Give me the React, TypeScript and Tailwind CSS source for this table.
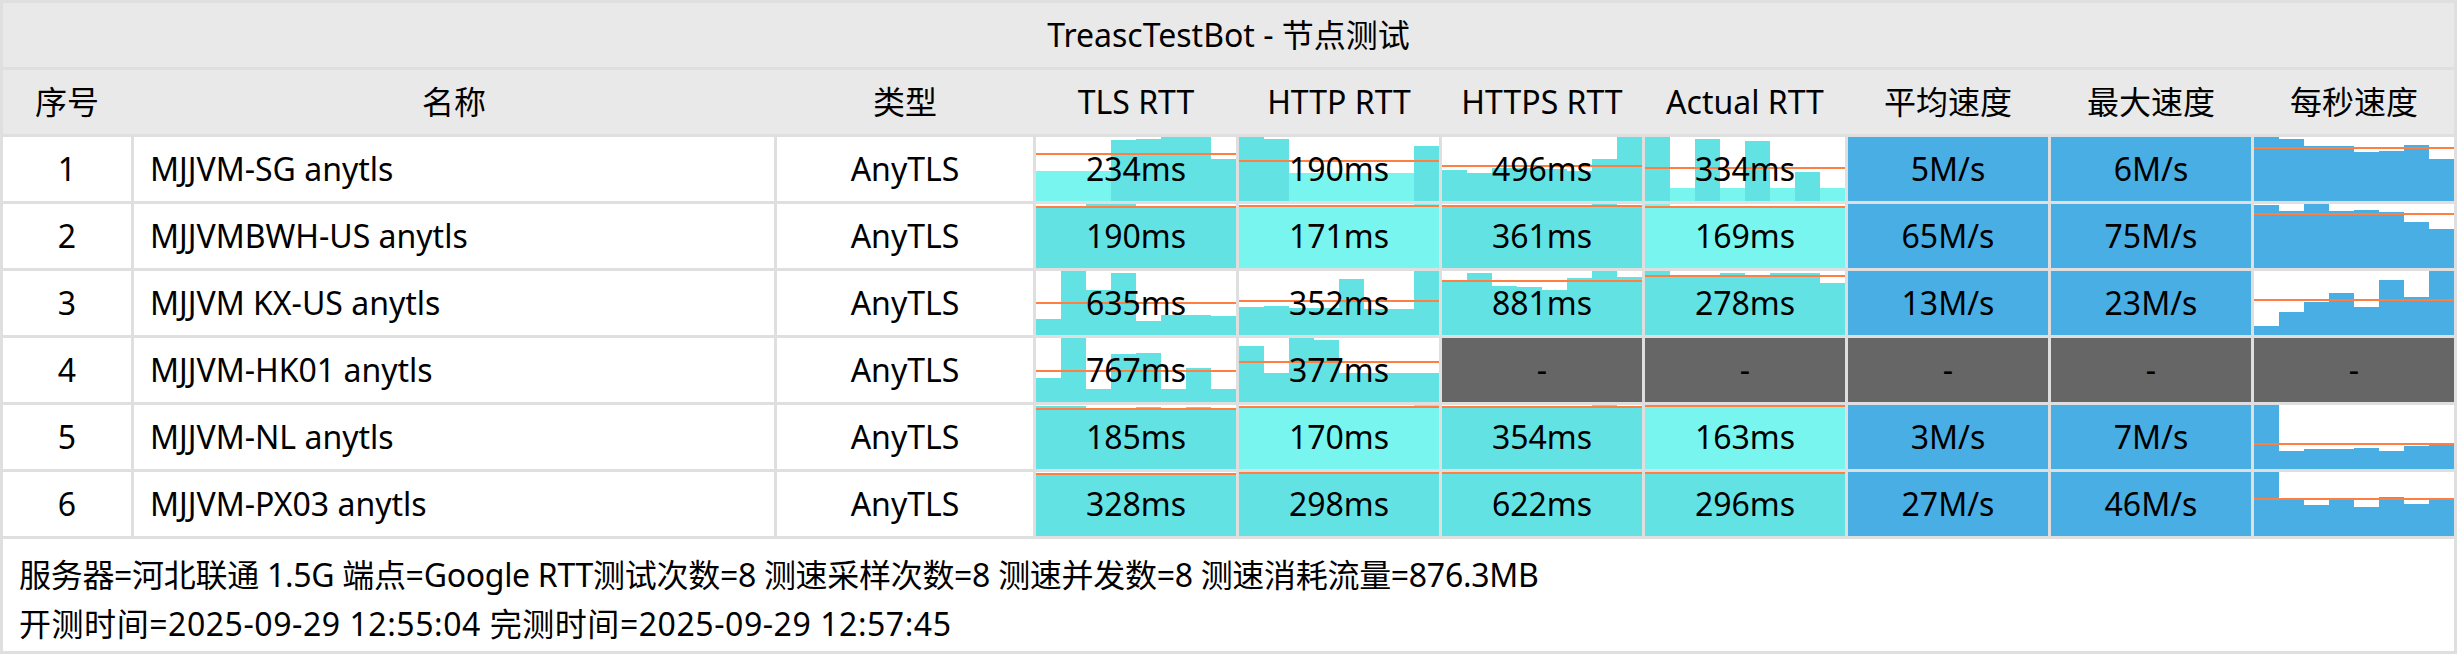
import React from "react";

type Chart = { bars: number[]; line: number; dark: string };

type Cell =
  | { kind: "rtt"; text: string; chart: Chart }
  | { kind: "speed"; text: string }
  | { kind: "series"; chart: Chart }
  | { kind: "fail" };

const L = "#78f5ef";
const D = "#63e2e4";
const B = "#48aee4";

function c(bars: number[], line: number, dark: string): Chart {
  return { bars, line, dark };
}

type Row = { id: number; name: string; cells: Cell[] };

const rows: Row[] = [
  {
    id: 1,
    name: "MJJVM-SG anytls",
    cells: [
      { kind: "rtt", text: "234ms", chart: c([30, 30, 30, 61, 62, 64, 64, 42], 47, "LLLDDDDD") },
      { kind: "rtt", text: "190ms", chart: c([64, 62, 28, 28, 28, 28, 28, 55], 40, "DDLLLLLD") },
      { kind: "rtt", text: "496ms", chart: c([31, 28, 33, 33, 32, 30, 42, 64], 35, "DDDDDDDD") },
      { kind: "rtt", text: "334ms", chart: c([64, 13, 62, 13, 60, 13, 29, 13], 33, "DLDLDLDL") },
      { kind: "speed", text: "5M/s" },
      { kind: "speed", text: "6M/s" },
      { kind: "series", chart: c([64, 62, 55, 55, 49, 50, 56, 42], 53, "BBBBBBBB") },
    ],
  },
  {
    id: 2,
    name: "MJJVMBWH-US anytls",
    cells: [
      { kind: "rtt", text: "190ms", chart: c([60, 61, 64, 64, 60, 60, 60, 60], 61, "DDDDDDDD") },
      { kind: "rtt", text: "171ms", chart: c([62, 62, 62, 62, 62, 62, 63, 64], 62, "LLLLLLLL") },
      { kind: "rtt", text: "361ms", chart: c([63, 62, 62, 62, 62, 62, 64, 62], 62, "DDDDDDDD") },
      { kind: "rtt", text: "169ms", chart: c([64, 61, 61, 61, 61, 61, 61, 60], 61, "LLLLLLLL") },
      { kind: "speed", text: "65M/s" },
      { kind: "speed", text: "75M/s" },
      { kind: "series", chart: c([63, 57, 64, 57, 58, 56, 46, 39], 54, "BBBBBBBB") },
    ],
  },
  {
    id: 3,
    name: "MJJVM KX-US anytls",
    cells: [
      { kind: "rtt", text: "635ms", chart: c([16, 64, 45, 62, 14, 20, 20, 19], 32, "DDDDDDDD") },
      { kind: "rtt", text: "352ms", chart: c([28, 29, 27, 27, 56, 26, 26, 64], 34, "DDDDDDDD") },
      { kind: "rtt", text: "881ms", chart: c([55, 62, 49, 48, 45, 57, 64, 58], 54, "DDDDDDDD") },
      { kind: "rtt", text: "278ms", chart: c([64, 58, 58, 62, 58, 62, 62, 52], 59, "DDDDDDDD") },
      { kind: "speed", text: "13M/s" },
      { kind: "speed", text: "23M/s" },
      { kind: "series", chart: c([9, 23, 33, 42, 28, 55, 38, 64], 35, "BBBBBBBB") },
    ],
  },
  {
    id: 4,
    name: "MJJVM-HK01 anytls",
    cells: [
      { kind: "rtt", text: "767ms", chart: c([24, 64, 13, 48, 49, 13, 34, 13], 31, "DDDDDDDD") },
      { kind: "rtt", text: "377ms", chart: c([56, 29, 64, 62, 29, 29, 29, 29], 40, "DDDDDDDD") },
      { kind: "fail" },
      { kind: "fail" },
      { kind: "fail" },
      { kind: "fail" },
      { kind: "fail" },
    ],
  },
  {
    id: 5,
    name: "MJJVM-NL anytls",
    cells: [
      { kind: "rtt", text: "185ms", chart: c([63, 63, 61, 61, 62, 61, 62, 61], 60, "DDDDDDDD") },
      { kind: "rtt", text: "170ms", chart: c([62, 62, 63, 63, 62, 62, 63, 64], 62, "LLLLLLLL") },
      { kind: "rtt", text: "354ms", chart: c([62, 62, 63, 62, 62, 63, 64, 62], 62, "DDDDDDDD") },
      { kind: "rtt", text: "163ms", chart: c([63, 63, 63, 63, 63, 64, 63, 63], 63, "LLLLLLLL") },
      { kind: "speed", text: "3M/s" },
      { kind: "speed", text: "7M/s" },
      { kind: "series", chart: c([64, 18, 20, 20, 21, 18, 23, 24], 25, "BBBBBBBB") },
    ],
  },
  {
    id: 6,
    name: "MJJVM-PX03 anytls",
    cells: [
      { kind: "rtt", text: "328ms", chart: c([62, 62, 63, 62, 62, 63, 62, 62], 62, "DDDDDDDD") },
      { kind: "rtt", text: "298ms", chart: c([63, 63, 63, 63, 63, 63, 63, 64], 63, "DDDDDDDD") },
      { kind: "rtt", text: "622ms", chart: c([63, 63, 63, 64, 63, 64, 63, 63], 63, "DDDDDDDD") },
      { kind: "rtt", text: "296ms", chart: c([63, 63, 63, 63, 63, 63, 63, 63], 63, "DDDDDDDD") },
      { kind: "speed", text: "27M/s" },
      { kind: "speed", text: "46M/s" },
      { kind: "series", chart: c([64, 37, 31, 37, 29, 39, 32, 37], 37, "BBBBBBBB") },
    ],
  },
];

const colorOf = (ch: string) => (ch === "L" ? L : ch === "D" ? D : B);

function Bars({ chart, text }: { chart: Chart; text?: string }) {
  return (
    <div className="relative h-[64px] bg-white overflow-hidden">
      <div className="absolute inset-0 flex items-end">
        {chart.bars.map((h, i) => (
          <div
            key={i}
            className="flex-1"
            style={{ height: `${h}px`, backgroundColor: colorOf(chart.dark[i]) }}
          />
        ))}
      </div>
      <div
        className="absolute left-0 right-0 h-[2px] bg-[#ff7f42]"
        style={{ bottom: `${chart.line - 1}px` }}
      />
      {text && (
        <div className="absolute inset-0 flex items-center justify-center">{text}</div>
      )}
    </div>
  );
}

const cols = "grid grid-cols-[128px_640px_256px_repeat(7,200px)] gap-x-[3px]";
const headers = ["序号", "名称", "类型", "TLS RTT", "HTTP RTT", "HTTPS RTT", "Actual RTT", "平均速度", "最大速度", "每秒速度"];

export default function App() {
  return (
    <div className="w-[2457px] h-[654px] bg-[#dfdfdf] p-[3px] flex flex-col gap-[3px] text-[32px] leading-none text-black font-['Noto_Sans','Noto_Sans_CJK_SC',sans-serif]">
      <div className="h-[64px] bg-[#e9e9e9] flex items-center justify-center">
        TreascTestBot - 节点测试
      </div>
      <div className={`${cols} h-[64px] bg-[#e9e9e9]`}>
        {headers.map((h) => (
          <div key={h} className="flex items-center justify-center">
            {h}
          </div>
        ))}
      </div>
      {rows.map((r) => (
        <div key={r.id} className={`${cols} h-[64px]`}>
          <div className="bg-white flex items-center justify-center">{r.id}</div>
          <div className="bg-white flex items-center pl-4">{r.name}</div>
          <div className="bg-white flex items-center justify-center">AnyTLS</div>
          {r.cells.map((cell, i) => {
            if (cell.kind === "rtt") return <Bars key={i} chart={cell.chart} text={cell.text} />;
            if (cell.kind === "series") return <Bars key={i} chart={cell.chart} />;
            if (cell.kind === "speed")
              return (
                <div key={i} className="bg-[#48aee4] flex items-center justify-center">
                  {cell.text}
                </div>
              );
            return (
              <div key={i} className="bg-[#666666] flex items-center justify-center">
                -
              </div>
            );
          })}
        </div>
      ))}
      <div className="flex-1 bg-white flex flex-col justify-center pl-4 pt-[8px] gap-[17px]">
        <div className="tracking-[-0.3px]">服务器=河北联通 1.5G 端点=Google RTT测试次数=8 测速采样次数=8 测速并发数=8 测速消耗流量=876.3MB</div>
        <div className="tracking-[0.55px]">开测时间=2025-09-29 12:55:04 完测时间=2025-09-29 12:57:45</div>
      </div>
    </div>
  );
}
